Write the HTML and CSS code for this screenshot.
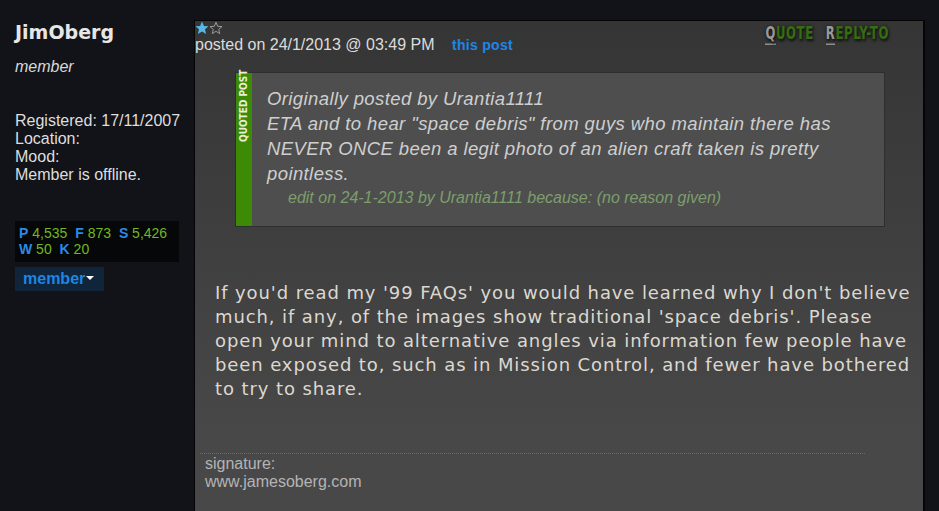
FILE: index.html
```html
<!DOCTYPE html>
<html lang="en">
<head>
  <meta charset="UTF-8" />
  <title>JimOberg - post</title>
  <link rel="stylesheet" href="styles.css">
</head>
<body>
  <div class="page">
    <div class="sidebar">
      <div class="username">JimOberg</div>
      <div class="rank">member</div>
      <div class="details">
        Registered: 17/11/2007<br>
        Location:<br>
        Mood:<br>
        Member is offline.
      </div>
      <div class="stats">
        <span class="key">P</span> <span class="num">4,535</span>
        <span class="key">F</span> <span class="num">873</span>
        <span class="key">S</span> <span class="num">5,426</span><br>
        <span class="key">W</span> <span class="num">50</span>
        <span class="key">K</span> <span class="num">20</span>
      </div>
      <div class="member-btn">member<span class="caret"></span></div>
    </div>

    <div class="post">
      <div class="post-head">
        <div class="post-meta">
          <div class="stars">
            <svg width="28" height="14" viewBox="0 0 28 14">
              <polygon points="7,0.5 8.9,4.9 13.5,5.2 10,8.3 11.1,13 7,10.5 2.9,13 4,8.3 0.5,5.2 5.1,4.9" fill="#55b8e6"/>
              <polygon points="21,1.2 22.7,5.3 27,5.6 23.7,8.4 24.7,12.6 21,10.3 17.3,12.6 18.3,8.4 15,5.6 19.3,5.3" fill="none" stroke="#9a9a9a" stroke-width="1"/>
            </svg>
          </div>
          <div class="posted">posted on 24/1/2013 @ 03:49 PM <a class="this-post" href="#">this post</a></div>
        </div>
        <div class="actions">
          <a href="#"><span class="hot">Q</span>UOTE</a>
          <a href="#"><span class="hot">R</span>EPLY-TO</a>
        </div>
      </div>

      <div class="quote">
        <div class="quote-label"><span>QUOTED POST</span></div>
        <div class="quote-body">
          Originally posted by Urantia1111<br>
          ETA and to hear "space debris" from guys who maintain there has NEVER ONCE been a legit photo of an alien craft taken is pretty pointless.
          <div class="edit">edit on 24-1-2013 by Urantia1111 because: (no reason given)</div>
        </div>
      </div>

      <div class="post-body">
        If you'd read my '99 FAQs' you would have learned why I don't believe much, if any, of the images show traditional 'space debris'. Please open your mind to alternative angles via information few people have been exposed to, such as in Mission Control, and fewer have bothered to try to share.
      </div>

      <div class="signature">
        signature:<br>
        www.jamesoberg.com
      </div>
    </div>
  </div>
</body>
</html>
```

FILE: styles.css
```css
* {
  box-sizing: border-box;
  margin: 0;
  padding: 0;
}
body {
  background: #121318;
  color: #e0e0e0;
  font-family: 'Liberation Sans', Arial, sans-serif;
  height: 511px;
  overflow: hidden;
}
.page {
  display: flex;
  height: 100%;
}
.sidebar {
  width: 194px;
  flex-shrink: 0;
  padding: 20px 4px 0 15px;
}
.username {
  font-family: 'DejaVu Sans', Verdana, sans-serif;
  font-weight: bold;
  font-size: 19px;
  line-height: 24px;
  color: #e6e6e6;
}
.rank {
  font-style: italic;
  font-size: 16px;
  line-height: 20px;
  margin-top: 13px;
  color: #d8d8d8;
}
.details {
  font-size: 16px;
  line-height: 18px;
  margin-top: 35px;
  color: #dedede;
}
.stats {
  margin-top: 37px;
  background: #060708;
  width: 164px;
  padding: 4px 4px 5px 4px;
  font-size: 14px;
  line-height: 16px;
}
.stats .key {
  color: #2b8ae6;
  font-weight: bold;
}
.stats .num {
  color: #73b81e;
  margin-right: 4px;
}
.member-btn {
  display: inline-block;
  margin-top: 5px;
  background: #10243a;
  color: #1d86e6;
  font-weight: bold;
  font-size: 16px;
  line-height: 24px;
  padding: 0 10px 0 8px;
}
.caret {
  display: inline-block;
  width: 0;
  height: 0;
  border-left: 4px solid transparent;
  border-right: 4px solid transparent;
  border-top: 4px solid #fff;
  vertical-align: 4px;
  margin-left: 1px;
}
.post {
  flex: 1;
  margin: 20px 14px 0 0;
  border: 1px solid #050505;
  border-right-width: 2px;
  border-bottom: none;
  background: linear-gradient(#353535, #484848 85%);
}
.post-head {
  display: flex;
  justify-content: space-between;
}
.stars {
  height: 15px;
}
.stars svg {
  display: block;
}
.posted {
  font-size: 16px;
  line-height: 17px;
  color: #dcdcdc;
}
.this-post {
  color: #1e86e8;
  font-weight: bold;
  font-size: 14px;
  letter-spacing: 0.3px;
  text-decoration: none;
  margin-left: 13px;
}
.actions {
  padding: 8px 34px 0 0;
  display: flex;
  gap: 12px;
}
.actions a {
  display: inline-block;
  font-family: 'DejaVu Sans Condensed', 'DejaVu Sans', sans-serif;
  font-weight: bold;
  font-size: 13px;
  line-height: 14px;
  color: #356d10;
  text-decoration: none;
  letter-spacing: 0.6px;
  transform: scaleY(1.35);
  text-shadow: 0 0 3px #1a1a1a, 1px 1px 2px #111;
}
.actions .hot {
  color: #9a9a9a;
  border-bottom: 1px solid #9a9a9a;
}
.quote {
  display: flex;
  margin: 18px 0 0 40px;
  width: 650px;
  background: #4e4e4e;
  border: 1px solid #2e2e2e;
}
.quote-label {
  width: 16px;
  flex-shrink: 0;
  background: #3d8a06;
  position: relative;
}
.quote-label span {
  position: absolute;
  top: 69px;
  left: 1px;
  transform: rotate(-90deg);
  transform-origin: top left;
  white-space: nowrap;
  font-family: 'DejaVu Sans Condensed', 'DejaVu Sans', sans-serif;
  font-weight: bold;
  font-size: 10px;
  line-height: 14px;
  color: #e8eed8;
}
.quote-body {
  padding: 13px 20px 18px 15px;
  font-style: italic;
  font-size: 18.5px;
  letter-spacing: 0.4px;
  line-height: 25px;
  color: #cfcfcf;
}
.edit {
  font-size: 16px;
  letter-spacing: 0;
  line-height: 20px;
  margin: 2px 0 0 21px;
  color: #7d9e6c;
}
.post-body {
  padding: 54px 0 0 20px;
  font-family: 'DejaVu Sans', Verdana, sans-serif;
  font-size: 18px;
  letter-spacing: 0.9px;
  line-height: 24px;
  color: #dcd8d0;
}
.signature {
  margin: 52px 0 0 5px;
  width: 665px;
  border-top: 1px dotted #6a6a6a;
  padding: 1px 0 0 5px;
  font-size: 16px;
  line-height: 18px;
  color: #b4b4b4;
}
```
